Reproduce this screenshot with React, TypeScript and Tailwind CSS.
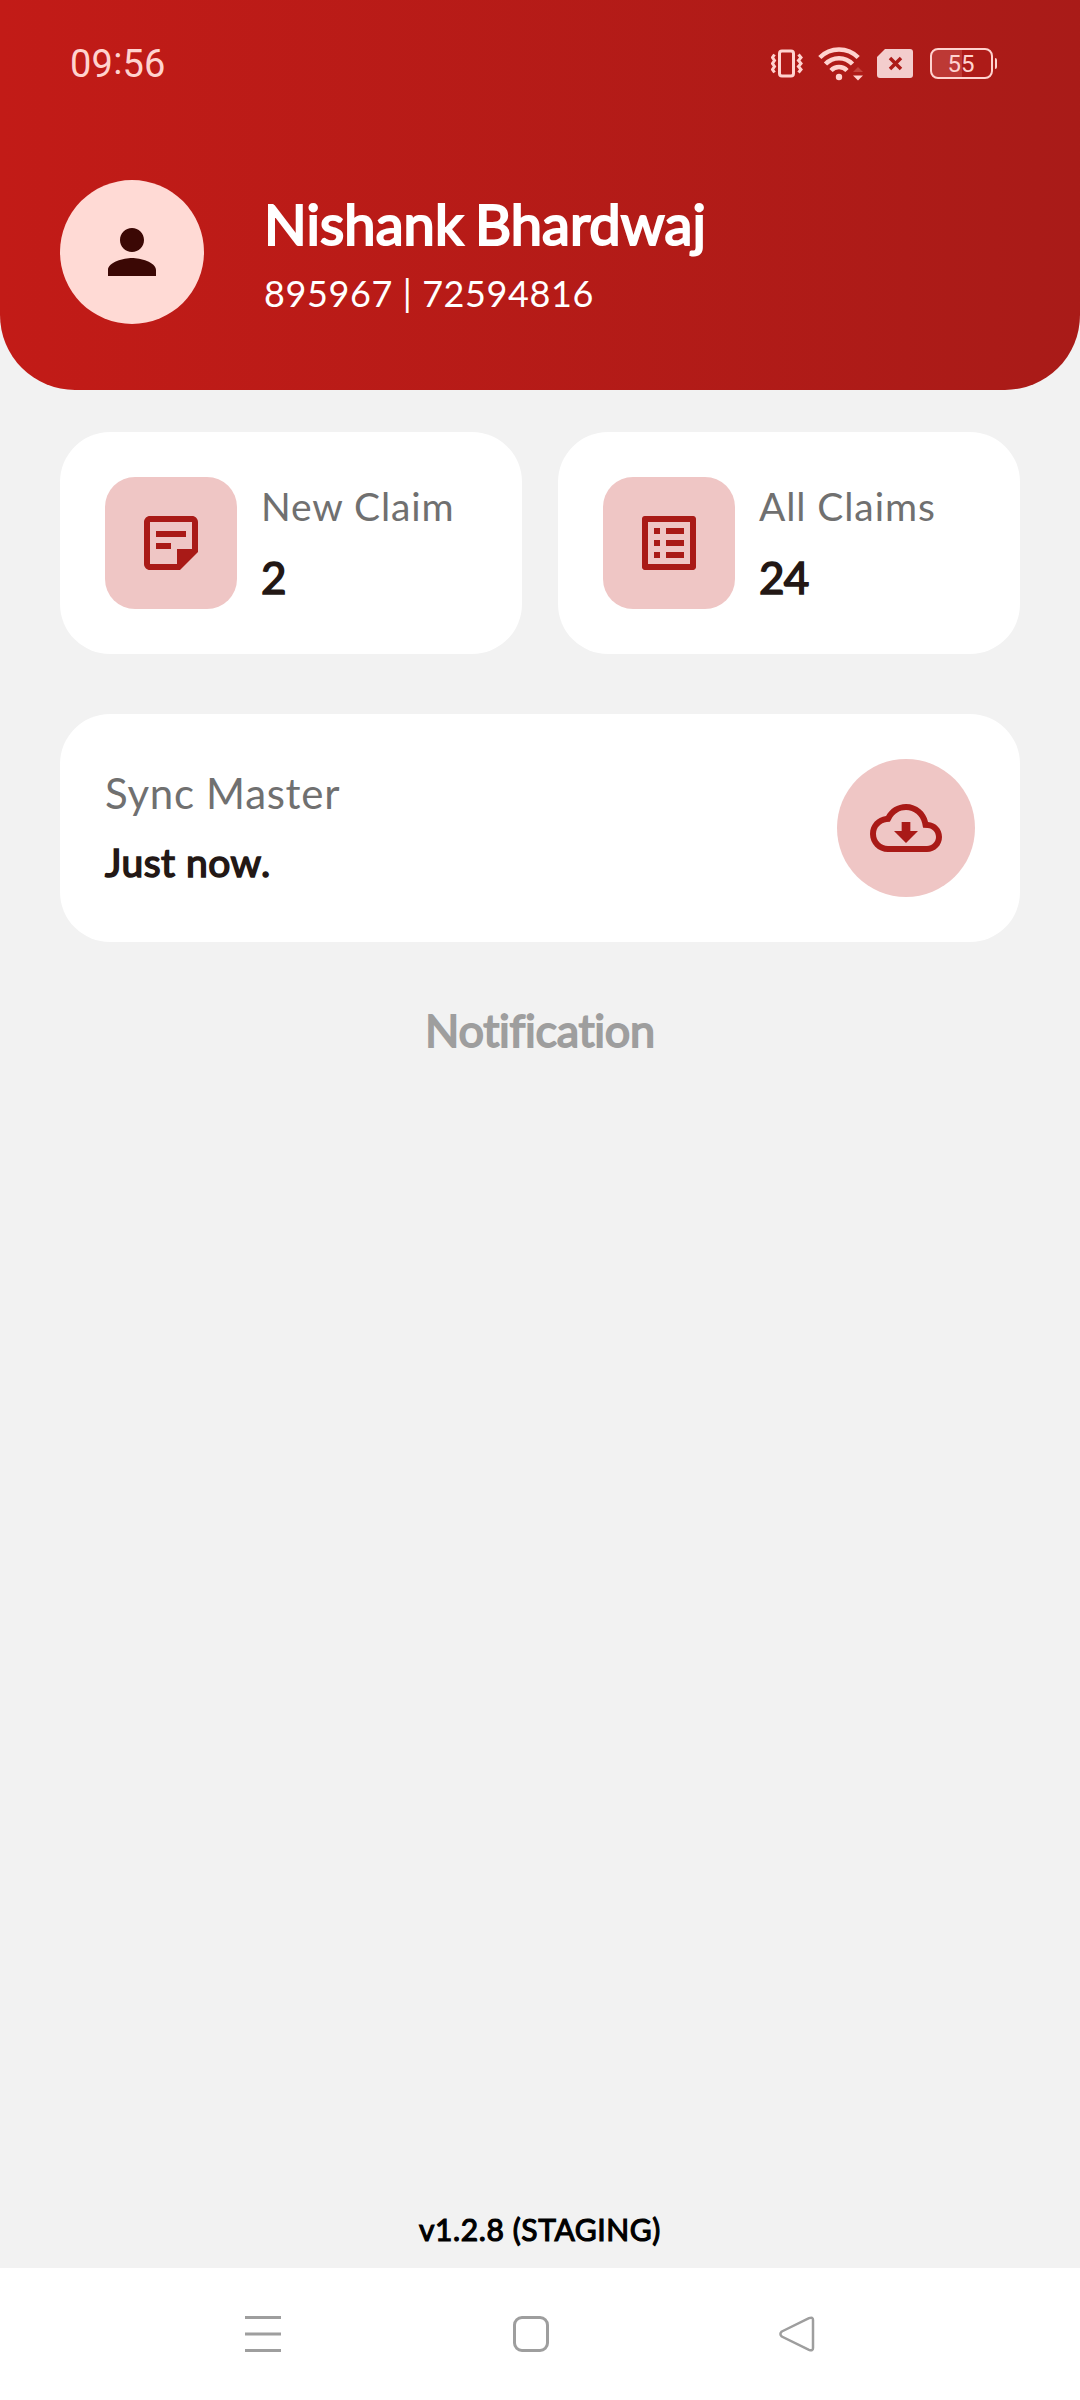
import React from 'react';

interface IconProps {
  path: string;
  className?: string;
}

interface ClaimCardProps {
  icon: string;
  label: string;
  count: number;
}

const ICONS = {
  person:
    'M12 12c2.21 0 4-1.79 4-4s-1.79-4-4-4-4 1.79-4 4 1.79 4 4 4zm0 2c-2.67 0-8 1.34-8 4v2h16v-2c0-2.66-5.33-4-8-4z',
  note:
    'M19 5v9h-5v5H5V5h14m0-2H5c-1.1 0-2 .9-2 2v14c0 1.1.9 2 2 2h10l6-6V5c0-1.1-.9-2-2-2zm-7 11H7v-2h5v2zm5-4H7V8h10v2z',
  list:
    'M19 5v14H5V5h14m1.1-2H3.9c-.5 0-.9.4-.9.9v16.2c0 .4.4.9.9.9h16.2c.4 0 .9-.5.9-.9V3.9c0-.5-.5-.9-.9-.9zM11 7h6v2h-6V7zm0 4h6v2h-6v-2zm0 4h6v2h-6v-2zM7 7h2v2H7V7zm0 4h2v2H7v-2zm0 4h2v2H7v-2z',
  cloud:
    'M19.35 10.04C18.67 6.59 15.64 4 12 4 9.11 4 6.6 5.64 5.35 8.04 2.34 8.36 0 10.91 0 14c0 3.31 2.69 6 6 6h13c2.76 0 5-2.24 5-5 0-2.64-2.05-4.78-4.65-4.96zM19 18H6c-2.21 0-4-1.79-4-4 0-2.05 1.53-3.76 3.56-3.97l1.07-.11.5-.95C8.08 7.14 9.94 6 12 6c2.62 0 4.88 1.86 5.39 4.43l.3 1.5 1.53.11c1.56.1 2.78 1.41 2.78 2.96 0 1.65-1.35 3-3 3zm-5.55-8h-2.9v3H8l4 4 4-4h-2.55v-3z',
};

const Icon: React.FC<IconProps> = ({ path, className = '' }) => (
  <svg viewBox="0 0 24 24" className={`size-[72px] fill-current ${className}`}>
    <path d={path} />
  </svg>
);

const StatusBar: React.FC = () => (
  <div className="flex h-[127px] items-center justify-between pl-[70px] pr-[83px] text-[#ffd3cf]">
    <div className="font-['Roboto',sans-serif] text-[38px] leading-none tracking-[0.2px]">
      09<span className="relative -top-[3px]">:</span>56
    </div>
    <div className="flex items-center">
      {/* Vibrate */}
      <svg width="34" height="34" viewBox="0 0 34 34" fill="none" stroke="currentColor">
        <rect x="8.5" y="4" width="14" height="25" rx="2.5" strokeWidth="3" />
        <path d="M3.500 7.500l-2 3 2 3-2 3 2 3-2 3 2 3M27.500 7.500l2.500 3-2.500 3 2.500 3-2.500 3 2.500 3-2.500 3" strokeWidth="3" />
      </svg>
      {/* Wifi */}
      <svg width="46" height="36" viewBox="0 0 46 36" fill="none" stroke="currentColor" strokeWidth="4.500" className="ml-[13px]">
        <path d="M1.800 11.500A27 27 0 0 1 40.200 11.500" />
        <path d="M7.500 18A18.500 18.500 0 0 1 34.500 18" />
        <path d="M13 24.500A11 11 0 0 1 29 24.500" />
        <circle cx="21" cy="31" r="3.200" fill="currentColor" stroke="none" />
        <path d="M35 29.500h10l-5 5z" fill="currentColor" stroke="none" />
        <path d="M35 26h10l-5-5z" fill="#c4423c" stroke="none" />
      </svg>
      {/* No sim */}
      <svg width="36" height="30" viewBox="0 0 36 30" className="ml-[13px]">
        <path d="M8 0h25a3 3 0 0 1 3 3v23a3 3 0 0 1-3 3H3a3 3 0 0 1-3-3V8z" fill="#f3cdcd" />
        <path d="M13 9l11 11M24 9l-11 11" stroke="#ad1b18" strokeWidth="3.500" />
      </svg>
      {/* Battery */}
      <div className="ml-[17px] flex items-center gap-0.5">
        <div className="flex h-[31px] w-[63px] items-center justify-center rounded-[8px] border-[2.500px] border-current bg-linear-to-r from-[#bd3935] from-50% to-[#ad1b18] to-50% font-['Roboto',sans-serif] text-[24px] leading-none">
          55
        </div>
        <div className="h-[11px] w-[2.500px] rounded-r bg-current" />
      </div>
    </div>
  </div>
);

const ClaimCard: React.FC<ClaimCardProps> = ({ icon, label, count }) => (
  <div className="flex h-[222px] flex-1 items-center rounded-[50px] bg-white pl-[45px]">
    <div className="flex size-[132px] items-center justify-center rounded-[30px] bg-[#efc6c5]">
      <Icon path={icon} className="text-[#a91a17]" />
    </div>
    <div className="ml-6">
      <div className="text-[39px] leading-[48px] tracking-[0.9px] text-[#707070]">{label}</div>
      <div className="mt-[20px] text-[44px] leading-[54px] tracking-[-0.8px] text-[#231815] [-webkit-text-stroke:1.600px]">{count}</div>
    </div>
  </div>
);

const NavBar: React.FC = () => (
  <div className="flex h-[132px] items-center bg-white pl-[245px] text-[#9e9e9e]">
    <svg width="36" height="36" viewBox="0 0 36 36" stroke="currentColor" strokeWidth="3">
      <path d="M0 1.500h36M0 18h36M0 34.500h36" />
    </svg>
    <div className="ml-[232px] size-9 rounded-[9px] border-[3px] border-current" />
    <svg width="36" height="36" viewBox="0 0 36 36" fill="none" stroke="currentColor" strokeWidth="2.500" className="ml-[230px]">
      <path d="M2.800 15.500L30 2.200Q34 .5 34 4v28q0 3.500-4 1.800L2.800 20.500Q0 18 2.800 15.500z" />
    </svg>
  </div>
);

export default function App() {
  return (
    <div className="flex h-[2400px] w-[1080px] flex-col bg-[#f2f2f2] font-['Lato',sans-serif] [font-variant-ligatures:none]">
      {/* Header */}
      <header className="h-[390px] rounded-b-[75px] bg-linear-to-r from-[#c21b17] to-[#a91b18]">
        <StatusBar />
        <div className="mt-[53px] flex h-36 items-center pl-[60px]">
          <div className="flex size-36 items-center justify-center rounded-full bg-[#ffdad5]">
            <Icon path={ICONS.person} className="text-[#3b0805]" />
          </div>
          <div className="ml-[60px] text-white">
            <div className="pt-0.5 text-[56px] leading-[70px] tracking-[0.1px] [-webkit-text-stroke:2.200px] [word-spacing:-3px]">Nishank Bhardwaj</div>
            <div className="mt-[10px] text-[36px] leading-[48px] tracking-[0.6px]">895967 | 72594816</div>
          </div>
        </div>
      </header>

      <main className="flex flex-1 flex-col px-[60px] pt-[42px]">
        <div className="flex gap-9">
          <ClaimCard icon={ICONS.note} label="New Claim" count={2} />
          <ClaimCard icon={ICONS.list} label="All Claims" count={24} />
        </div>

        {/* Sync */}
        <div className="mt-[60px] flex h-[228px] items-center justify-between rounded-[50px] bg-white px-[45px]">
          <div>
            <div className="text-[42px] leading-[52px] tracking-[0.7px] text-[#707070]">Sync Master</div>
            <div className="mt-[18px] pb-0.5 text-[39px] leading-[50px] tracking-[0.5px] text-[#231815] [-webkit-text-stroke:1.600px]">Just now.</div>
          </div>
          <div className="flex size-[138px] items-center justify-center rounded-full bg-[#efc6c5]">
            <Icon path={ICONS.cloud} className="text-[#a91a17]" />
          </div>
        </div>

        <div className="mt-[61px] text-center text-[45px] leading-[54px] tracking-[-0.3px] text-[#9e9e9e] [-webkit-text-stroke:1.800px]">Notification</div>
        <div className="mb-[21px] mt-auto text-center text-[30px] leading-[36px] tracking-[0.6px] text-black [-webkit-text-stroke:1.200px]">v1.2.8 (STAGING)</div>
      </main>

      <NavBar />
    </div>
  );
}
